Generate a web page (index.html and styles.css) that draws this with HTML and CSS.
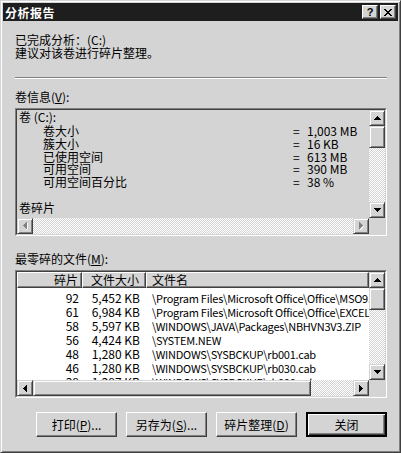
FILE: index.html
```html
<!DOCTYPE html>
<html lang="zh-CN">
<head>
    <meta charset="UTF-8">
    <title>分析报告</title>
    <link rel="stylesheet" href="styles.css">
</head>
<body>
    <div class="window">
        <div class="titlebar">
            <span class="title">分析报告</span>
            <span class="caption-btns">
                <span class="cbtn help">?</span>
                <span class="cbtn">
                    <svg width="8" height="7" viewBox="0 0 8 7"><path d="M0 0h2v1h-2zM6 0h2v1h-2zM1 1h2v1h-2zM5 1h2v1h-2zM2 2h4v1h-4zM3 3h2v1h-2zM2 4h4v1h-4zM1 5h2v1h-2zM5 5h2v1h-2zM0 6h2v1h-2zM6 6h2v1h-2z" fill="#000"/></svg>
                </span>
            </span>
        </div>

        <div class="client">
            <p class="status">已完成分析：(C:)<br>建议对该卷进行碎片整理。</p>
            <div class="sep"></div>

            <div class="label">卷信息(<u>V</u>):</div>
            <div class="box">
                <div class="box-inner">
                    <div class="view info">
                        <div class="first">卷 (C:):</div>
                        <div class="stat"><span>卷大小</span><span class="eq">=</span><span>1,003 MB</span></div>
                        <div class="stat"><span>簇大小</span><span class="eq">=</span><span>16 KB</span></div>
                        <div class="stat"><span>已使用空间</span><span class="eq">=</span><span>613 MB</span></div>
                        <div class="stat"><span>可用空间</span><span class="eq">=</span><span>390 MB</span></div>
                        <div class="stat"><span>可用空间百分比</span><span class="eq">=</span><span>38 %</span></div>
                        <div class="gap"></div>
                        <div>卷碎片</div>
                    </div>
                    <div class="vscroll">
                        <span class="sbtn"><svg width="7" height="4"><path d="M3 0h1v1h-1zM2 1h3v1h-3zM1 2h5v1h-5zM0 3h7v1h-7z"/></svg></span>
                        <div class="track"><span class="thumb"></span></div>
                        <span class="sbtn"><svg width="7" height="4"><path d="M0 0h7v1h-7zM1 1h5v1h-5zM2 2h3v1h-3zM3 3h1v1h-1z"/></svg></span>
                    </div>
                    <div class="hscroll">
                        <span class="sbtn off"><svg width="5" height="8"><path d="M3 0h1v1h-1zM2 1h2v1h-2zM1 2h3v1h-3zM0 3h4v1h-4zM1 4h3v1h-3zM2 5h2v1h-2zM3 6h1v1h-1z" fill="#808080"/><path d="M4 1h1v6h-1zM3 7h1v1h-1z" fill="#fff"/></svg></span>
                        <div class="track"></div>
                        <span class="sbtn off"><svg width="5" height="8"><path d="M0 0h1v1h-1zM0 1h2v1h-2zM0 2h3v1h-3zM0 3h4v1h-4zM0 4h3v1h-3zM0 5h2v1h-2zM0 6h1v1h-1z" fill="#808080"/><path d="M1 7h1v1h-1zM2 6h1v1h-1zM3 5h1v1h-1zM4 4h1v1h-1z" fill="#fff"/></svg></span>
                    </div>
                    <div class="corner"></div>
                </div>
            </div>

            <div class="label second">最零碎的文件(<u>M</u>):</div>
            <div class="box">
                <div class="box-inner">
                    <div class="view files">
                        <div class="head">
                            <span class="hcell num">碎片</span>
                            <span class="hcell size">文件大小</span>
                            <span class="hcell name">文件名</span>
                        </div>
                        <div class="rows">
                            <div class="row"><span class="num">92</span><span class="size">5,452 KB</span><span class="name">\Program Files\Microsoft Office\Office\MSO9.DLL</span></div>
                            <div class="row"><span class="num">61</span><span class="size">6,984 KB</span><span class="name">\Program Files\Microsoft Office\Office\EXCEL.EXE</span></div>
                            <div class="row"><span class="num">58</span><span class="size">5,597 KB</span><span class="name">\WINDOWS\JAVA\Packages\NBHVN3V3.ZIP</span></div>
                            <div class="row"><span class="num">56</span><span class="size">4,424 KB</span><span class="name">\SYSTEM.NEW</span></div>
                            <div class="row"><span class="num">48</span><span class="size">1,280 KB</span><span class="name">\WINDOWS\SYSBCKUP\rb001.cab</span></div>
                            <div class="row"><span class="num">46</span><span class="size">1,280 KB</span><span class="name">\WINDOWS\SYSBCKUP\rb030.cab</span></div>
                            <div class="row"><span class="num">38</span><span class="size">1,287 KB</span><span class="name">\WINDOWS\SYSBCKUP\rb000.cab</span></div>
                        </div>
                    </div>
                    <div class="vscroll">
                        <span class="sbtn"><svg width="7" height="4"><path d="M3 0h1v1h-1zM2 1h3v1h-3zM1 2h5v1h-5zM0 3h7v1h-7z"/></svg></span>
                        <div class="track"><span class="thumb"></span></div>
                        <span class="sbtn"><svg width="7" height="4"><path d="M0 0h7v1h-7zM1 1h5v1h-5zM2 2h3v1h-3zM3 3h1v1h-1z"/></svg></span>
                    </div>
                    <div class="hscroll">
                        <span class="sbtn"><svg width="4" height="7"><path d="M3 0h1v7h-1zM2 1h1v5h-1zM1 2h1v3h-1zM0 3h1v1h-1z"/></svg></span>
                        <div class="track"><span class="thumb wide"></span></div>
                        <span class="sbtn"><svg width="4" height="7"><path d="M0 0h1v7h-1zM1 1h1v5h-1zM2 2h1v3h-1zM3 3h1v1h-1z"/></svg></span>
                    </div>
                    <div class="corner"></div>
                </div>
            </div>

            <div class="buttons">
                <button class="btn">打印(<u>P</u>)...</button>
                <button class="btn">另存为(<u>S</u>)...</button>
                <button class="btn">碎片整理(<u>D</u>)</button>
                <button class="btn default">关闭</button>
            </div>
        </div>
    </div>
</body>
</html>
```

FILE: styles.css
```css
* {
    box-sizing: border-box;
}
body {
    margin: 0;
    background: #d4d4d4;
    font-family: "Noto Sans CJK SC", "Liberation Sans", sans-serif;
    font-size: 12px;
    line-height: 13px;
    color: #000;
}
.window {
    width: 401px;
    height: 453px;
    border: 1px solid;
    border-color: #d4d4d4 #404040 #404040 #d4d4d4;
    box-shadow: inset 1px 1px #fff, inset -1px -1px #808080;
    padding: 2px;
}
.titlebar {
    height: 18px;
    background: #1e1e1e;
    display: flex;
    align-items: center;
    justify-content: space-between;
    padding: 0 2px 0 2px;
}
.title {
    color: #fff;
    font-weight: bold;
    letter-spacing: 0.5px;
}
.caption-btns {
    display: flex;
    gap: 2px;
}
.cbtn {
    width: 16px;
    height: 14px;
    background: #d4d4d4;
    border: 1px solid;
    border-color: #fff #404040 #404040 #fff;
    box-shadow: inset -1px -1px #808080;
    display: flex;
    align-items: center;
    justify-content: center;
    font: bold 11px/1 "Liberation Sans", sans-serif;
}
.client {
    padding: 0 11px 0 12px;
}
.status {
    margin: 12px 0 0 0;
}
.sep {
    margin-top: 18px;
    height: 2px;
    border-top: 1px solid #808080;
    border-bottom: 1px solid #fff;
}
.label {
    margin-top: 11px;
}
.label.second {
    margin-top: 16px;
}
u {
    text-decoration: underline;
    text-underline-offset: 1px;
}
.box {
    margin-top: 5px;
    height: 128px;
    border: 1px solid;
    border-color: #808080 #fff #fff #808080;
}
.box-inner {
    height: 100%;
    border: 1px solid;
    border-color: #404040 #d4d4d4 #d4d4d4 #404040;
    display: grid;
    grid-template-columns: 1fr 16px;
    grid-template-rows: 1fr 16px;
}
.view {
    overflow: hidden;
    min-width: 0;
}
.info {
    padding: 0 2px;
}
.info .first {
    height: 14px;
    line-height: 14px;
}
.stat {
    display: grid;
    grid-template-columns: 250px 14px auto;
    margin-left: 24px;
    height: 12.8px;
    line-height: 13px;
}
.gap {
    height: 13px;
}
.vscroll {
    display: flex;
    flex-direction: column;
}
.hscroll {
    display: flex;
}
.track {
    flex: 1;
    background: repeating-conic-gradient(#fff 0 25%, #d4d4d4 0 50%) 0 0 / 2px 2px;
    display: flex;
}
.sbtn, .thumb {
    width: 16px;
    height: 16px;
    flex: none;
    background: #d4d4d4;
    border: 1px solid;
    border-color: #d4d4d4 #404040 #404040 #d4d4d4;
    box-shadow: inset 1px 1px #fff, inset -1px -1px #808080;
    display: flex;
    align-items: center;
    justify-content: center;
}
.thumb {
    height: 22px;
}
.thumb.wide {
    width: 278px;
    height: 16px;
}
.corner {
    background: #d4d4d4;
}
.files {
    background: #fff;
    white-space: nowrap;
}
.head {
    display: flex;
    height: 16px;
    background: #d4d4d4;
}
.hcell {
    height: 16px;
    line-height: 14px;
    border: 1px solid;
    border-color: #fff #404040 #404040 #fff;
    box-shadow: inset -1px -1px #808080;
    flex: none;
}
.num {
    width: 65px;
    text-align: right;
    padding-right: 3px;
}
.size {
    width: 64px;
    text-align: right;
    padding-right: 6px;
}
.name {
    padding-left: 5px;
}
.hcell.name {
    flex: 1;
}
.row .name {
    font-size: 11px;
    letter-spacing: -0.25px;
    padding-left: 6px;
}
.rows {
    padding-top: 3px;
}
.row {
    display: flex;
    height: 14px;
    line-height: 14px;
}
.row span {
    flex: none;
}
.buttons {
    margin-top: 14px;
    display: flex;
    justify-content: flex-end;
    gap: 9px;
}
.btn {
    width: 81px;
    height: 25px;
    padding: 0;
    font: inherit;
    color: #000;
    background: #d4d4d4;
    border: 1px solid;
    border-color: #fff #404040 #404040 #fff;
    box-shadow: inset -1px -1px #808080;
}
.btn.default {
    border-width: 2px;
    border-color: #000;
    box-shadow: inset 1px 1px #fff, inset -1px -1px #404040, inset -2px -2px #808080;
}
```
